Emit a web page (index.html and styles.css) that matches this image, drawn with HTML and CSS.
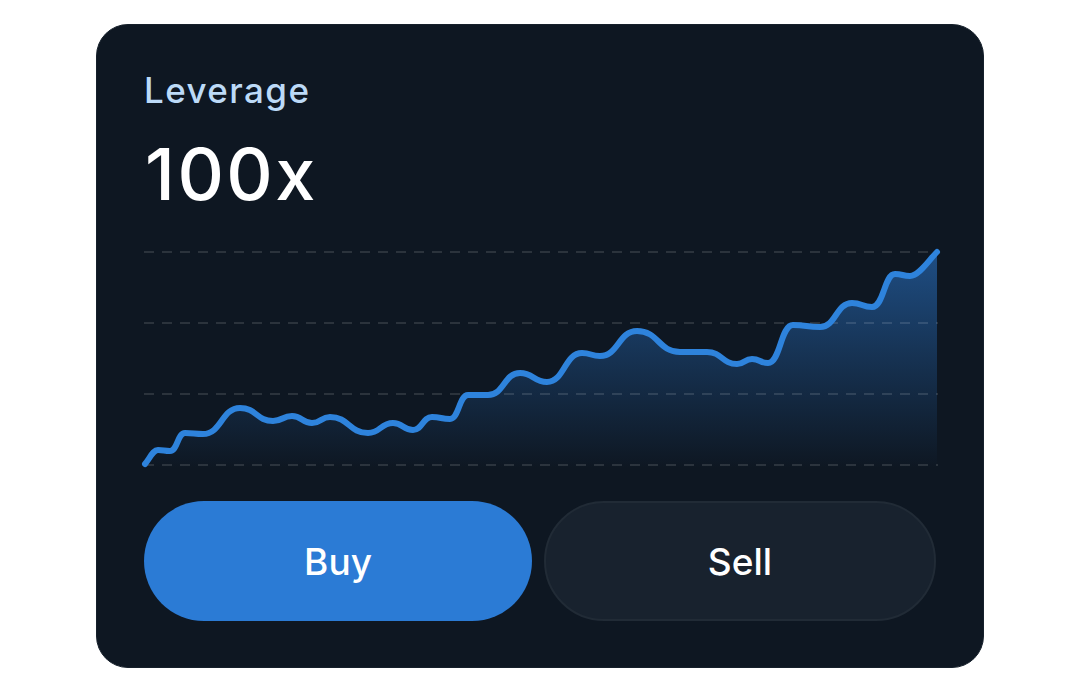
FILE: index.html
```html
<!DOCTYPE html>
<html lang="en">
<head>
<meta charset="utf-8">
<title>Leverage</title>
<link rel="stylesheet" href="styles.css">
</head>
<body>
<main class="card">
  <div class="label">Leverage</div>
  <div class="value">100x</div>
  <div class="chart">
    <svg class="chart-svg" width="792" height="220" viewBox="0 0 792 220">
      <defs>
        <linearGradient id="fillGrad" x1="0" y1="0" x2="0" y2="220" gradientUnits="userSpaceOnUse">
          <stop offset="0" stop-color="#2a74c8" stop-opacity="0.6"/>
          <stop offset="0.55" stop-color="#2a74c8" stop-opacity="0.26"/>
          <stop offset="1" stop-color="#2a74c8" stop-opacity="0"/>
        </linearGradient>
      </defs>
      <path class="area" d="M1,216 C6,210 9,202 14,202 C20,202 20,203 26,203 C33.5,203 33.5,185 41,185 C50,185 50,186 59,186 C77.5,186 77.5,160 96,160 C112.5,160 112.5,173 129,173 C138.5,173 138.5,168 148,168 C158,168 158,175 168,175 C177,175 177,169 186,169 C205,169 205,185 224,185 C236.5,185 236.5,175 249,175 C259,175 259,182 269,182 C278.5,182 278.5,169 288,169 C297,169 297,171 306,171 C315,171 315,147 324,147 C334,147 334,147 344,147 C360,147 360,125 376,125 C389.5,125 389.5,134 403,134 C420.5,134 420.5,105 438,105 C447,105 447,108 456,108 C474.5,108 474.5,83 493,83 C514.5,83 514.5,104 536,104 C549.5,104 549.5,104 563,104 C578,104 578,116 593,116 C600.5,116 600.5,111 608,111 C616,111 616,115 624,115 C636.5,115 636.5,77 649,77 C662.5,77 662.5,79 676,79 C692,79 692,55 708,55 C718,55 718,59 728,59 C740,59 740,26 751,26 C758.5,26 758.5,28 766,28 C775,28 785,12 793,4 L793,220 L1,220 Z"/>
      <g class="grid">
        <line x1="0" y1="4" x2="794" y2="4"/>
        <line x1="0" y1="75" x2="794" y2="75"/>
        <line x1="0" y1="146" x2="794" y2="146"/>
        <line x1="0" y1="217" x2="794" y2="217"/>
      </g>
      <path class="line" d="M1,216 C6,210 9,202 14,202 C20,202 20,203 26,203 C33.5,203 33.5,185 41,185 C50,185 50,186 59,186 C77.5,186 77.5,160 96,160 C112.5,160 112.5,173 129,173 C138.5,173 138.5,168 148,168 C158,168 158,175 168,175 C177,175 177,169 186,169 C205,169 205,185 224,185 C236.5,185 236.5,175 249,175 C259,175 259,182 269,182 C278.5,182 278.5,169 288,169 C297,169 297,171 306,171 C315,171 315,147 324,147 C334,147 334,147 344,147 C360,147 360,125 376,125 C389.5,125 389.5,134 403,134 C420.5,134 420.5,105 438,105 C447,105 447,108 456,108 C474.5,108 474.5,83 493,83 C514.5,83 514.5,104 536,104 C549.5,104 549.5,104 563,104 C578,104 578,116 593,116 C600.5,116 600.5,111 608,111 C616,111 616,115 624,115 C636.5,115 636.5,77 649,77 C662.5,77 662.5,79 676,79 C692,79 692,55 708,55 C718,55 718,59 728,59 C740,59 740,26 751,26 C758.5,26 758.5,28 766,28 C775,28 785,12 793,4"/>
    </svg>
  </div>
  <div class="actions">
    <button class="btn btn-buy" type="button">Buy</button>
    <button class="btn btn-sell" type="button">Sell</button>
  </div>
</main>
</body>
</html>
```

FILE: styles.css
```css
* { box-sizing: border-box; }
html, body {
  margin: 0;
  padding: 0;
  background: #ffffff;
}
body {
  width: 1080px;
  height: 693px;
  padding-top: 24px;
  padding-left: 96px;
  font-family: Inter, "Liberation Sans", Arial, sans-serif;
}
.card {
  width: 888px;
  height: 644px;
  border-radius: 32px;
  background: #0e1722;
  border: 1px solid #16202b;
  padding: 47px 47px 46px;
  display: flex;
  flex-direction: column;
}
.label {
  color: #bcdaf7;
  font-size: 35px;
  font-weight: 500;
  line-height: 36px;
  height: 36px;
  letter-spacing: 1.4px;
}
.value {
  color: #ffffff;
  font-size: 72px;
  font-weight: 500;
  line-height: 72px;
  height: 72px;
  margin-top: 30px;
  padding-left: 1px;
  letter-spacing: 2.5px;
}
.chart {
  margin-top: 38px;
  height: 220px;
}
.chart-svg {
  display: block;
  overflow: visible;
}
.grid line {
  stroke: rgba(255, 255, 255, 0.12);
  stroke-width: 2;
  stroke-dasharray: 10 8;
}
.area {
  fill: url(#fillGrad);
}
.line {
  fill: none;
  stroke: #2e83dc;
  stroke-width: 6;
  stroke-linecap: round;
  stroke-linejoin: round;
}
.actions {
  margin-top: 33px;
  display: flex;
  gap: 12px;
}
.btn {
  flex: 1 1 0;
  min-width: 0;
  height: 120px;
  padding: 0;
  border-radius: 60px;
  font-family: inherit;
  font-size: 37px;
  font-weight: 500;
  color: #ffffff;
  cursor: pointer;
  letter-spacing: 0;
}
.btn-buy {
  background: #2b7bd5;
  border: none;
}
.btn-sell {
  background: #18222e;
  border: 2px solid #212b36;
}
```
